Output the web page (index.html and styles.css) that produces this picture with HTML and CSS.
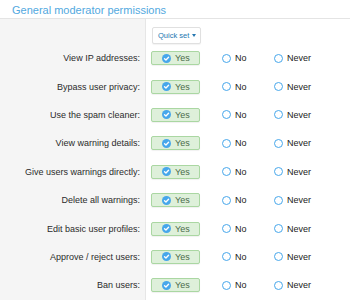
FILE: index.html
```html
<!DOCTYPE html>
<html>
<head>
<meta charset="utf-8">
<link rel="stylesheet" href="styles.css">
</head>
<body>
<div class="block">
  <h2 class="block-header">General moderator permissions</h2>
  <div class="block-body">
    <div class="row row-quick">
      <div class="label"></div>
      <div class="controls">
        <span class="quick-btn">Quick set <span class="caret"></span></span>
      </div>
    </div>
    <div class="row"><div class="label">View IP addresses:</div><div class="controls"><span class="opt yes"><span class="chk"><svg viewBox="0 0 10 10"><path d="M2.8 5.2 L4.4 6.7 L7.3 3.6" fill="none" stroke="#fff" stroke-width="1.5" stroke-linecap="round" stroke-linejoin="round"/></svg></span>Yes</span><span class="opt no"><span class="radio"></span>No</span><span class="opt never"><span class="radio"></span>Never</span></div></div>
    <div class="row"><div class="label">Bypass user privacy:</div><div class="controls"><span class="opt yes"><span class="chk"><svg viewBox="0 0 10 10"><path d="M2.8 5.2 L4.4 6.7 L7.3 3.6" fill="none" stroke="#fff" stroke-width="1.5" stroke-linecap="round" stroke-linejoin="round"/></svg></span>Yes</span><span class="opt no"><span class="radio"></span>No</span><span class="opt never"><span class="radio"></span>Never</span></div></div>
    <div class="row"><div class="label">Use the spam cleaner:</div><div class="controls"><span class="opt yes"><span class="chk"><svg viewBox="0 0 10 10"><path d="M2.8 5.2 L4.4 6.7 L7.3 3.6" fill="none" stroke="#fff" stroke-width="1.5" stroke-linecap="round" stroke-linejoin="round"/></svg></span>Yes</span><span class="opt no"><span class="radio"></span>No</span><span class="opt never"><span class="radio"></span>Never</span></div></div>
    <div class="row"><div class="label">View warning details:</div><div class="controls"><span class="opt yes"><span class="chk"><svg viewBox="0 0 10 10"><path d="M2.8 5.2 L4.4 6.7 L7.3 3.6" fill="none" stroke="#fff" stroke-width="1.5" stroke-linecap="round" stroke-linejoin="round"/></svg></span>Yes</span><span class="opt no"><span class="radio"></span>No</span><span class="opt never"><span class="radio"></span>Never</span></div></div>
    <div class="row"><div class="label">Give users warnings directly:</div><div class="controls"><span class="opt yes"><span class="chk"><svg viewBox="0 0 10 10"><path d="M2.8 5.2 L4.4 6.7 L7.3 3.6" fill="none" stroke="#fff" stroke-width="1.5" stroke-linecap="round" stroke-linejoin="round"/></svg></span>Yes</span><span class="opt no"><span class="radio"></span>No</span><span class="opt never"><span class="radio"></span>Never</span></div></div>
    <div class="row"><div class="label">Delete all warnings:</div><div class="controls"><span class="opt yes"><span class="chk"><svg viewBox="0 0 10 10"><path d="M2.8 5.2 L4.4 6.7 L7.3 3.6" fill="none" stroke="#fff" stroke-width="1.5" stroke-linecap="round" stroke-linejoin="round"/></svg></span>Yes</span><span class="opt no"><span class="radio"></span>No</span><span class="opt never"><span class="radio"></span>Never</span></div></div>
    <div class="row"><div class="label">Edit basic user profiles:</div><div class="controls"><span class="opt yes"><span class="chk"><svg viewBox="0 0 10 10"><path d="M2.8 5.2 L4.4 6.7 L7.3 3.6" fill="none" stroke="#fff" stroke-width="1.5" stroke-linecap="round" stroke-linejoin="round"/></svg></span>Yes</span><span class="opt no"><span class="radio"></span>No</span><span class="opt never"><span class="radio"></span>Never</span></div></div>
    <div class="row"><div class="label">Approve / reject users:</div><div class="controls"><span class="opt yes"><span class="chk"><svg viewBox="0 0 10 10"><path d="M2.8 5.2 L4.4 6.7 L7.3 3.6" fill="none" stroke="#fff" stroke-width="1.5" stroke-linecap="round" stroke-linejoin="round"/></svg></span>Yes</span><span class="opt no"><span class="radio"></span>No</span><span class="opt never"><span class="radio"></span>Never</span></div></div>
    <div class="row"><div class="label">Ban users:</div><div class="controls"><span class="opt yes"><span class="chk"><svg viewBox="0 0 10 10"><path d="M2.8 5.2 L4.4 6.7 L7.3 3.6" fill="none" stroke="#fff" stroke-width="1.5" stroke-linecap="round" stroke-linejoin="round"/></svg></span>Yes</span><span class="opt no"><span class="radio"></span>No</span><span class="opt never"><span class="radio"></span>Never</span></div></div>
  </div>
</div>
</body>
</html>
```
FILE: styles.css
```css
html, body {
  margin: 0;
  padding: 0;
  background: #fff;
  font-family: "Liberation Sans", Arial, sans-serif;
  color: #222;
}
.block {
  width: 350px;
  height: 300px;
  overflow: hidden;
}
.block-header {
  margin: 0;
  height: 19px;
  box-sizing: border-box;
  padding: 4px 0 0 12px;
  font-size: 11px;
  font-weight: normal;
  color: #52a9e0;
  border-bottom: 1px solid #e4e4e4;
}
.block-body {
  background: linear-gradient(to right, #f5f5f5 0, #f5f5f5 145px, #e6e6e6 145px, #e6e6e6 146px, #fff 146px);
  padding-top: 8px;
  border-bottom: 1px solid #e4e4e4;
}
.row {
  display: flex;
  align-items: center;
  height: 28.4px;
}
.row-quick {
  height: 17px;
  margin-bottom: 0;
}
.label {
  width: 140px;
  flex: none;
  text-align: right;
  font-size: 9px;
  color: #2b2b2b;
}
.controls {
  display: flex;
  align-items: center;
  padding-left: 11px;
}
.quick-btn {
  display: inline-flex;
  align-items: center;
  height: 17px;
  box-sizing: border-box;
  padding: 0 4px 0 5px;
  margin-left: 1px;
  border: 1px solid #e0e0e0;
  border-radius: 2px;
  background: #fff;
  color: #2577b1;
  font-size: 7.5px;
  box-shadow: 0 1px 1px rgba(0,0,0,0.05);
}
.caret {
  display: inline-block;
  margin-left: 3px;
  width: 0;
  height: 0;
  border-left: 2px solid transparent;
  border-right: 2px solid transparent;
  border-top: 3px solid #2577b1;
}
.opt {
  display: inline-flex;
  align-items: center;
  font-size: 9px;
  color: #222;
}
.yes {
  width: 49px;
  height: 14px;
  box-sizing: border-box;
  padding-left: 10px;
  background: #def0da;
  border: 1px solid #aad7a2;
  border-radius: 2px;
  color: #4b6b4b;
  box-shadow: 0 1px 1px rgba(0,0,0,0.06);
}
.chk {
  width: 9px;
  height: 9px;
  border-radius: 50%;
  background: #47a7eb;
  margin-right: 4px;
  display: inline-flex;
}
.chk svg { width: 9px; height: 9px; }
.radio {
  width: 7px;
  height: 7px;
  border: 1.5px solid #47a7eb;
  border-radius: 50%;
  background: #fff;
  margin-right: 4px;
}
.no {
  margin-left: 22px;
  width: 48px;
}
.never {
  margin-left: 4px;
}
```
